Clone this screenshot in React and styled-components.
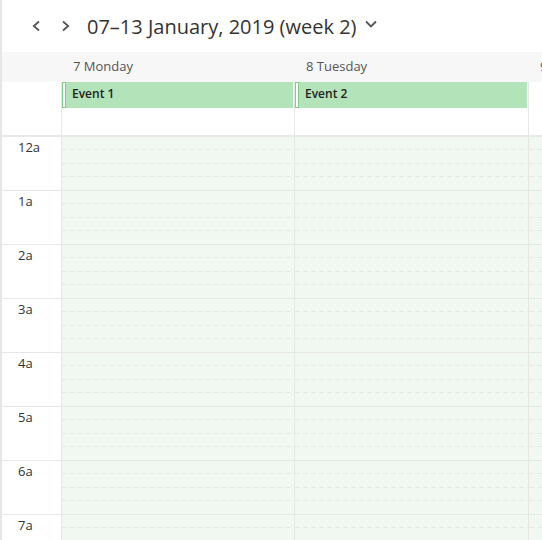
import React from 'react'
import styled, { createGlobalStyle } from 'styled-components'

const GlobalStyle = createGlobalStyle`
  html, body {
    margin: 0;
    padding: 0;
    background: #fff;
  }
  body {
    font-family: "Open Sans", "Noto Sans", "Liberation Sans", sans-serif;
    color: #333;
    overflow: hidden;
  }
`

const COLS = '60px 233px 234px 233px'

const Page = styled.div`
  width: 540px;
  height: 540px;
  border-left: 2px solid #e6e6e6;
  overflow: hidden;
  display: flex;
  flex-direction: column;
`

const Toolbar = styled.div`
  height: 52px;
  flex: none;
  display: flex;
  align-items: center;
  padding-left: 27px;
  box-sizing: border-box;
`

const NavButton = styled.button`
  border: none;
  background: none;
  padding: 0;
  width: 14px;
  height: 14px;
  margin-right: ${props => props.gap}px;
  display: flex;
  align-items: center;
  justify-content: center;
  color: #555;
  cursor: pointer;
`

const Title = styled.h1`
  margin: 0;
  font-size: 20px;
  font-weight: 400;
  color: #333;
  white-space: nowrap;
`

const Caret = styled.span`
  margin-left: 8px;
  display: flex;
  color: #555;
  margin-top: -5px;
`

const DayHeads = styled.div`
  display: grid;
  grid-template-columns: ${COLS};
  height: 30px;
  flex: none;
  background: #f7f7f7;
`

const DayLabel = styled.div`
  font-size: 13px;
  color: #555;
  padding: 0 0 2px 11px;
  display: flex;
  align-items: center;
  white-space: nowrap;
  overflow: hidden;
`

const AllDay = styled.div`
  display: grid;
  grid-template-columns: ${COLS};
  height: 53px;
  flex: none;
  border-bottom: 2px solid #e8e8e8;
`

const AllDayCell = styled.div`
  border-right: 1px solid #e6e6e6;
  box-sizing: border-box;
`

const EventBar = styled.div`
  height: 26px;
  background: #b3e3b8;
  display: flex;
  align-items: center;
  margin-right: 1px;
  font-size: 12px;
  font-weight: 600;
  color: #222;
`

const EventText = styled.span`
  padding-bottom: 3px;
`

const EventGrip = styled.span`
  width: 2px;
  height: 24px;
  background: #fff;
  border: 1px solid #7fcb87;
  margin-right: 6px;
  flex: none;
`

const HourRow = styled.div`
  display: grid;
  grid-template-columns: ${COLS};
  height: 54px;
  flex: none;
  border-bottom: 1px solid #e6e6e6;
  box-sizing: border-box;
`

const TimeCell = styled.div`
  border-right: 1px solid #e6e6e6;
  font-size: 13px;
  color: #333;
  padding: 1px 0 0 16px;
`

const DayCell = styled.div`
  background: #f1f8f1;
  border-right: 1px solid #e6e6e6;
  display: grid;
  grid-template-rows: repeat(4, 1fr);
`

const Slot = styled.div`
  background: ${props =>
    props.last
      ? 'none'
      : 'linear-gradient(to right, #e5eae5 5px, transparent 5px) left bottom / 8px 1px repeat-x'};
`

const Chevron = ({ dir }) => {
  const d = {
    left: 'M10 2.5 L4.8 7 L10 11.5',
    right: 'M4 2.5 L9.2 7 L4 11.5',
    down: 'M2 4.5 L7 9.5 L12 4.5',
  }[dir]
  return (
    <svg width="14" height="14" viewBox="0 0 14 14" fill="none">
      <path d={d} stroke="currentColor" strokeWidth="1.8" strokeLinejoin="miter" />
    </svg>
  )
}

const days = ['7 Monday', '8 Tuesday', '9 Wednesday']
const events = ['Event 1', 'Event 2', null]
const hours = ['12a', '1a', '2a', '3a', '4a', '5a', '6a', '7a']

export default function App() {
  return (
    <>
      <GlobalStyle />
      <Page>
        <Toolbar>
          <NavButton gap={16} aria-label="Previous week">
            <Chevron dir="left" />
          </NavButton>
          <NavButton gap={14} aria-label="Next week">
            <Chevron dir="right" />
          </NavButton>
          <Title>07–13 January, 2019 (week 2)</Title>
          <Caret>
            <Chevron dir="down" />
          </Caret>
        </Toolbar>
        <DayHeads>
          <div />
          {days.map(d => (
            <DayLabel key={d}>{d}</DayLabel>
          ))}
        </DayHeads>
        <AllDay>
          <AllDayCell />
          {events.map((e, i) => (
            <AllDayCell key={i}>
              {e && (
                <EventBar>
                  <EventGrip />
                  <EventText>{e}</EventText>
                </EventBar>
              )}
            </AllDayCell>
          ))}
        </AllDay>
        {hours.map(h => (
          <HourRow key={h}>
            <TimeCell>{h}</TimeCell>
            {days.map(d => (
              <DayCell key={d}>
                <Slot />
                <Slot />
                <Slot />
                <Slot last />
              </DayCell>
            ))}
          </HourRow>
        ))}
      </Page>
    </>
  )
}
